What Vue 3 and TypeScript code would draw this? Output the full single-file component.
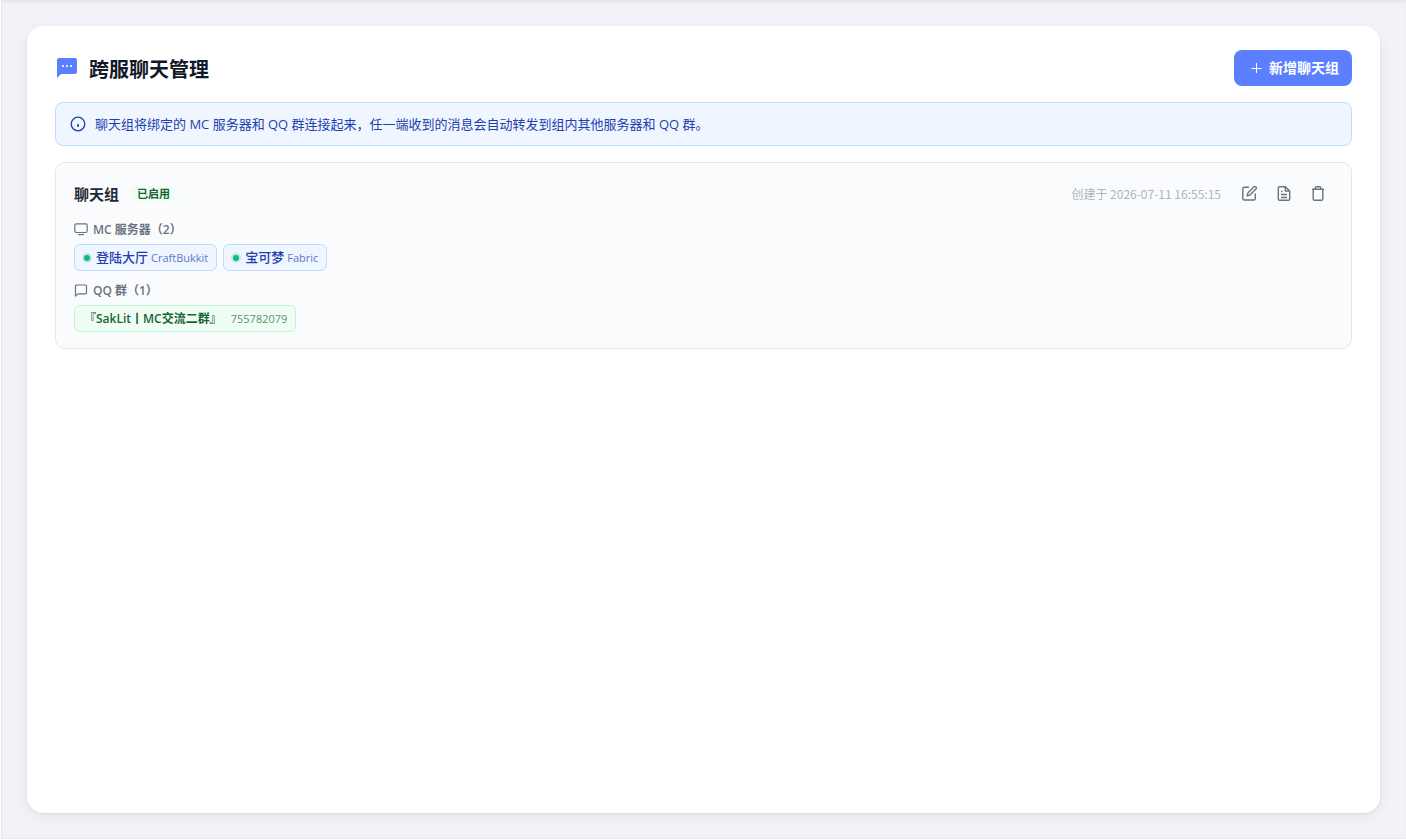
<script setup lang="ts">
interface Server { name: string; type: string }
interface QqGroup { name: string; id: string }
interface ChatGroup {
  name: string
  createdAt: string
  servers: Server[]
  qqGroups: QqGroup[]
}

const groups: ChatGroup[] = [
  {
    name: '聊天组',
    createdAt: '2026-07-11 16:55:15',
    servers: [
      { name: '登陆大厅', type: 'CraftBukkit' },
      { name: '宝可梦', type: 'Fabric' },
    ],
    qqGroups: [{ name: '『SakLit丨MC交流二群』', id: '755782079' }],
  },
]
</script>

<template>
  <main class="page">
    <section class="panel">
      <header class="panel-head">
        <h1>
          <svg class="title-icon" width="24" height="24" viewBox="0 0 24 24" aria-hidden="true">
            <path fill="#5b7fff" d="M20 2H4c-1.100 0-2 .9-2 2v18l4-4h14c1.100 0 2-.9 2-2V4c0-1.100-.9-2-2-2z" />
            <path fill="#dfe6ff" d="M7 9h2v2H7zM11 9h2v2h-2zM15 9h2v2h-2z" />
          </svg>
          <span>跨服聊天管理</span>
        </h1>
        <button type="button" class="add">
          <svg width="12" height="12" viewBox="0 0 12 12" fill="none" stroke="currentColor" aria-hidden="true">
            <path d="M6.500 1v10M1.500 6.500h10" />
          </svg>
          <span>新增聊天组</span>
        </button>
      </header>

      <div class="notice">
        <svg width="16" height="16" viewBox="0 0 16 16" fill="none" stroke="currentColor" aria-hidden="true">
          <circle cx="8" cy="8" r="6.800" stroke-width="1.300" />
          <path d="M8 8v3" stroke-width="1.600" />
        </svg>
        <span>聊天组将绑定的 MC 服务器和 QQ 群连接起来，任一端收到的消息会自动转发到组内其他服务器和 QQ 群。</span>
      </div>

      <article v-for="group in groups" :key="group.name" class="group">
        <div class="group-head">
          <h2>{{ group.name }}</h2>
          <span class="status">已启用</span>
          <span class="created">创建于 {{ group.createdAt }}</span>
          <div class="actions">
            <button type="button" aria-label="编辑">
              <svg width="16" height="16" viewBox="0 0 16 16" fill="none" stroke="currentColor" stroke-width="1.400" stroke-linejoin="round" stroke-linecap="round" aria-hidden="true">
                <path d="M6.500 1.200H2A1.500 1.500 0 0 0 .8 2.700v9.800A1.500 1.500 0 0 0 2.300 14h9.500a1.500 1.500 0 0 0 1.500-1.500V8" />
                <path d="M11.700.9a1.500 1.500 0 0 1 2.200 2.200L8 9l-2.900.8.800-2.900z" />
              </svg>
            </button>
            <button type="button" aria-label="日志">
              <svg width="16" height="16" viewBox="0 0 16 16" fill="none" stroke="currentColor" stroke-width="1.400" stroke-linejoin="round" aria-hidden="true">
                <path d="M9.500.8H3.500A1.200 1.200 0 0 0 2.300 2v11a1.200 1.200 0 0 0 1.200 1.200h9a1.200 1.200 0 0 0 1.200-1.200V5z" />
                <path d="M9.300.8v4.200h4.400M5 5.500h1.500M5 8.500h6M5 11.500h6" />
              </svg>
            </button>
            <button type="button" aria-label="删除">
              <svg width="16" height="16" viewBox="0 0 16 16" fill="none" stroke="currentColor" stroke-width="1.400" stroke-linejoin="round" aria-hidden="true">
                <path d="M2 3.300h12M5.200 3.300V2A1.200 1.200 0 0 1 6.400.8h3.200A1.200 1.200 0 0 1 10.800 2v1.300M3.200 3.300V13a1.300 1.300 0 0 0 1.300 1.200h7a1.300 1.300 0 0 0 1.300-1.200V3.300" />
              </svg>
            </button>
          </div>
        </div>

        <div class="binding">
          <h3>
            <svg width="14" height="14" viewBox="0 0 14 14" fill="none" stroke="currentColor" stroke-width="1.200" aria-hidden="true">
              <rect x=".8" y=".8" width="12.400" height="8.700" rx="1.500" />
              <path d="M4 11.600h6" />
            </svg>
            <span>MC 服务器（{{ group.servers.length }}）</span>
          </h3>
          <div class="chips">
            <span v-for="server in group.servers" :key="server.name" class="chip server">
              <i class="dot"></i>
              <b>{{ server.name }}</b>
              <small>{{ server.type }}</small>
            </span>
          </div>
        </div>

        <div class="binding">
          <h3>
            <svg width="14" height="14" viewBox="0 0 14 14" fill="none" stroke="currentColor" stroke-width="1.200" stroke-linejoin="round" aria-hidden="true">
              <path d="M1.500 12.200V2a1 1 0 0 1 1-1h9a1 1 0 0 1 1 1v6.800a1 1 0 0 1-1 1H3.900z" />
            </svg>
            <span>QQ 群（{{ group.qqGroups.length }}）</span>
          </h3>
          <div class="chips">
            <span v-for="qq in group.qqGroups" :key="qq.id" class="chip qq">
              <b>{{ qq.name }}</b>
              <small>{{ qq.id }}</small>
            </span>
          </div>
        </div>
      </article>
    </section>
  </main>
</template>

<style>
body {
  margin: 0;
  background: #fff;
}
</style>

<style scoped>
.page {
  box-sizing: border-box;
  min-height: calc(100vh - 1px);
  margin-left: 1px;
  padding: 26px 26px 25px 25px;
  display: flex;
  border-left: 1px solid #e6e8ee;
  border-bottom: 1px solid #e6e8ee;
  background: #f1f3f8;
  box-shadow: inset 0 3px 3px -1px #e3e5ea;
  font-family: "Open Sans", "Noto Sans CJK SC", sans-serif;
  font-size: 13px;
  line-height: 20px;
}
.panel {
  flex: 1;
  padding: 24px 28px;
  display: flex;
  flex-direction: column;
  gap: 16px;
  border-radius: 16px;
  background: #fff;
  box-shadow: 0 1px 3px rgba(30, 40, 60, 0.08), 0 4px 16px rgba(30, 40, 60, 0.05);
}
.panel-head {
  display: flex;
  align-items: center;
  justify-content: space-between;
}
h1, h2, h3 { margin: 0; }
h1 {
  display: flex;
  align-items: center;
  gap: 10px;
  color: #111827;
  font-size: 20px;
  line-height: 28px;
  font-weight: 700;
}
h1 span { padding-top: 4px; }
.title-icon { display: block; }
button {
  border: 0;
  font-family: inherit;
  cursor: pointer;
}
.add {
  height: 36px;
  padding: 0 13px 0 16px;
  display: flex;
  align-items: center;
  gap: 7px;
  border-radius: 8px;
  background: #5b7fff;
  color: #fff;
  font-size: 14px;
  line-height: 20px;
  font-weight: 700;
}
.notice {
  padding: 11px 14px;
  display: flex;
  align-items: center;
  gap: 9px;
  border: 1px solid #bfdbfe;
  border-radius: 8px;
  background: #eff6ff;
  color: #1e40af;
}
.notice svg { flex: none; }
.group {
  padding: 18px;
  padding-right: 17px;
  padding-bottom: 16px;
  border: 1px solid #e2e6ec;
  border-radius: 10px;
  background: #fafbfd;
}
.group-head {
  display: flex;
  align-items: center;
  height: 26px;
}
h2 {
  color: #1f2937;
  font-size: 15px;
  line-height: 24px;
  font-weight: 700;
}
.status {
  margin-left: 10px;
  padding: 0 8px;
  border-radius: 8px;
  background: #f0fdf4;
  color: #166534;
  font-size: 11px;
  line-height: 16px;
  font-weight: 700;
}
.created {
  margin-left: auto;
  color: #adb5c0;
  font-family: "Noto Sans CJK SC", sans-serif;
  font-size: 12px;
}
.actions {
  margin-left: 13px;
  display: flex;
  gap: 2px;
}
.actions button {
  padding: 8px;
  display: flex;
  background: transparent;
  color: #6b7280;
}
.binding { margin-top: 10px; }
.group-head + .binding { margin-top: 13px; }
h3 {
  display: flex;
  align-items: center;
  gap: 5px;
  color: #6b7280;
  font-size: 12px;
  line-height: 20px;
  font-weight: 600;
}
.chips {
  margin-top: 4px;
  display: flex;
  flex-wrap: wrap;
  gap: 6px;
}
.chip {
  padding: 0 8px 0 9px;
  display: flex;
  align-items: center;
  gap: 3px;
  border: 1px solid #bfdbfe;
  border-radius: 6px;
  background: #eff6ff;
  color: #1e40af;
  line-height: 25px;
}
.chip b { font-weight: 500; }
.chip small {
  font-size: 11px;
  opacity: 0.7;
}
.dot {
  width: 6px;
  height: 6px;
  margin-right: 3px;
  border-radius: 50%;
  background: #10b981;
  box-shadow: 0 0 0 2px rgba(16, 185, 129, 0.2);
}
.qq {
  gap: 9px;
  border-color: #bbf7d0;
  background: #f0fdf4;
  color: #166534;
  font-size: 12px;
}
.qq b { font-weight: 600; }
</style>
